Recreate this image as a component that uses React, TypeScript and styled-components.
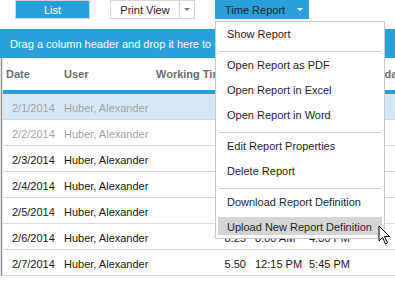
import styled, {createGlobalStyle} from "styled-components";

const GlobalStyle = createGlobalStyle`
  body {
    margin: 0;
    background: #fff;
    font-family: "Liberation Sans", Arial, sans-serif;
  }
`

type Entry = {
    date: string
    user: string
    hours: string
    start: string
    end: string
    muted?: boolean
    selected?: boolean
}

const entries: Entry[] = [
    {date: "2/1/2014", user: "Huber, Alexander", hours: "", start: "", end: "", muted: true, selected: true},
    {date: "2/2/2014", user: "Huber, Alexander", hours: "", start: "", end: "", muted: true},
    {date: "2/3/2014", user: "Huber, Alexander", hours: "8.00", start: "8:00 AM", end: "4:30 PM"},
    {date: "2/4/2014", user: "Huber, Alexander", hours: "7.75", start: "8:15 AM", end: "4:30 PM"},
    {date: "2/5/2014", user: "Huber, Alexander", hours: "8.00", start: "8:00 AM", end: "4:30 PM"},
    {date: "2/6/2014", user: "Huber, Alexander", hours: "8.25", start: "8:00 AM", end: "4:30 PM"},
    {date: "2/7/2014", user: "Huber, Alexander", hours: "5.50", start: "12:15 PM", end: "5:45 PM"},
]

const menuGroups = [
    ["Show Report"],
    ["Open Report as PDF", "Open Report in Excel", "Open Report in Word"],
    ["Edit Report Properties", "Delete Report"],
    ["Download Report Definition", "Upload New Report Definition"],
]

const App = () => {
    return (
        <Page>
            <GlobalStyle/>
            <Toolbar>
                <PrimaryButton $width={75} $bordered>List</PrimaryButton>
                <SplitButton>
                    <PlainButton>Print View</PlainButton>
                    <ArrowPart>
                        <Caret $color={"#777"}/>
                    </ArrowPart>
                </SplitButton>
                <MenuAnchor>
                    <PrimaryButton $width={94} $dark>
                        <span>Time Report</span>
                        <Caret $color={"#fff"}/>
                    </PrimaryButton>
                    <Menu>
                        {menuGroups.map((group, gi) =>
                            <MenuGroup key={gi}>
                                {gi > 0 && <Separator/>}
                                {group.map(label =>
                                    <MenuItem key={label} $active={label === "Upload New Report Definition"}>
                                        {label}
                                    </MenuItem>
                                )}
                            </MenuGroup>
                        )}
                    </Menu>
                </MenuAnchor>
            </Toolbar>
            <GroupBar>Drag a column header and drop it here to group by that column</GroupBar>
            <Table>
                <Strip/>
                <TableBody>
                    <HeaderRow>
                        <Cell $width={57} $pad={3}>Date</Cell>
                        <Cell $width={90} $pad={4}>User</Cell>
                        <Cell $width={100} $pad={6}>Working Time</Cell>
                        <Cell $width={55} $pad={5}>Start</Cell>
                        <Cell $width={51} $pad={4}>End</Cell>
                        <Cell $width={60} $pad={0}>Weekday</Cell>
                    </HeaderRow>
                    <HeaderLine/>
                    {entries.map(e =>
                        <Row key={e.date} $muted={e.muted} $selected={e.selected}>
                            <Cell $width={57} $pad={9}>{e.date}</Cell>
                            <Cell $width={90} $pad={4}>{e.user}</Cell>
                            <Cell $width={100} $pad={0} $right>{e.hours}</Cell>
                            <Cell $width={55} $pad={5}>{e.start}</Cell>
                            <Cell $width={50} $pad={4}>{e.end}</Cell>
                        </Row>
                    )}
                </TableBody>
            </Table>
            <Pointer width="14" height="21" viewBox="0 0 14 21">
                <path d="M1 1 L1 16 L4.5 12.5 L7.5 19 L9.5 18 L6.5 11.5 L11.5 11.5 Z"
                      fill="#fff" stroke="#000" strokeWidth="1" strokeLinejoin="miter"/>
            </Pointer>
        </Page>
    )
}

export default App


const Page = styled.div`
  position: relative;
  width: 395px;
  height: 282px;
  overflow: hidden;
  font-size: 11px;
`

const Toolbar = styled.div`
  display: flex;
  align-items: flex-start;
  gap: 20px;
  height: 29px;
  padding-left: 15px;
`

const PrimaryButton = styled.div<{ $width: number, $bordered?: boolean, $dark?: boolean }>`
  box-sizing: border-box;
  display: flex;
  align-items: center;
  justify-content: ${p => p.$dark ? "space-between" : "center"};
  width: ${p => p.$width}px;
  height: 19px;
  padding: ${p => p.$dark ? "0 6px 0 10px" : "0"};
  background: #29a0da;
  border: ${p => p.$bordered ? "1px solid #d4d4d4" : "none"};
  color: ${p => p.$dark ? "#1d2430" : "#fff"};
  font-size: 11px;
`

const SplitButton = styled.div`
  display: flex;
  height: 19px;
  box-sizing: border-box;
  border: 1px solid #d6d6d6;
`

const PlainButton = styled.div`
  display: flex;
  align-items: center;
  justify-content: center;
  width: 68px;
  color: #1d1d1d;
  font-size: 11px;
  border-right: 1px solid #d6d6d6;
`

const ArrowPart = styled.div`
  display: flex;
  align-items: center;
  justify-content: center;
  width: 14px;
`

const Caret = styled.span<{ $color: string }>`
  width: 0;
  height: 0;
  border-left: 3px solid transparent;
  border-right: 3px solid transparent;
  border-top: 3px solid ${p => p.$color};
`

const MenuAnchor = styled.div`
  position: relative;
`

const Menu = styled.div`
  position: absolute;
  top: 21px;
  left: 0;
  z-index: 5;
  box-sizing: border-box;
  width: 170px;
  display: flex;
  flex-direction: column;
  padding: 2px 2px 0;
  background: #fff;
  border: 1px solid #c9c9c9;
`

const MenuGroup = styled.div`
  display: flex;
  flex-direction: column;

  &:last-child > div:last-child {
    margin-bottom: 3px;
  }
`

const Separator = styled.div`
  height: 1px;
  margin: 2px 1px 3px 1px;
  background: #d2d2d2;
`

const MenuItem = styled.div<{ $active?: boolean }>`
  box-sizing: border-box;
  height: 18px;
  margin-bottom: 7px;
  padding: 2px 0 0 9px;
  line-height: 16px;
  font-size: 11px;
  color: #1e1e1e;
  white-space: nowrap;
  background: ${p => p.$active ? "#d5d5d5" : "transparent"};
`

const GroupBar = styled.div`
  display: flex;
  align-items: center;
  height: 29px;
  padding-left: 10px;
  background: #29a0da;
  color: #fff;
  font-size: 11px;
  white-space: nowrap;
  overflow: hidden;
`

const Table = styled.div`
  display: flex;
`

const Strip = styled.div`
  flex: 0 0 3px;
  background: linear-gradient(to right, #e2e2e2 0 1px, #8e8e8e 1px 2px, #e2e2e2 2px 3px);
`

const TableBody = styled.div`
  flex: 1;
  min-width: 0;
`

const HeaderRow = styled.div`
  display: flex;
  align-items: center;
  height: 32px;
  font-size: 11px;
  font-weight: bold;
  color: #6c6c6c;
  white-space: nowrap;
`

const HeaderLine = styled.div`
  height: 4px;
  background: #29a0da;
`

const Row = styled.div<{ $muted?: boolean, $selected?: boolean }>`
  box-sizing: border-box;
  display: flex;
  align-items: center;
  height: 26px;
  padding-top: 2px;
  border-bottom: 1px solid #d9d9d9;
  background: ${p => p.$selected ? "#d6e8f3" : "#fff"};
  color: ${p => p.$muted ? "#a3a3a3" : "#161616"};
  font-size: 11px;
  white-space: nowrap;
`

const Cell = styled.div<{ $width: number, $pad: number, $right?: boolean }>`
  box-sizing: border-box;
  flex: 0 0 ${p => p.$width}px;
  overflow: hidden;
  padding-left: ${p => p.$pad}px;
  padding-right: ${p => p.$right ? 4 : 0}px;
  text-align: ${p => p.$right ? "right" : "left"};
`

const Pointer = styled.svg`
  position: absolute;
  left: 378px;
  top: 225px;
  z-index: 6;
`
